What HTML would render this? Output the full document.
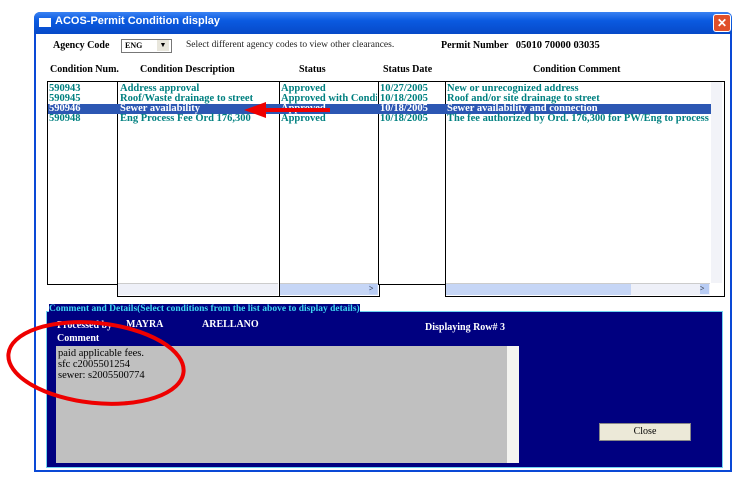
<!DOCTYPE html>
<html><head><style>
body{margin:0;width:743px;height:483px;background:#fff;position:relative;overflow:hidden;font-family:"Liberation Serif",serif;}
.a{position:absolute;}
.t{font-size:10.5px;font-weight:bold;color:#008080;white-space:nowrap;line-height:10px}
.h{font-size:10px;font-weight:bold;color:#000;white-space:nowrap}
.box{position:absolute;background:#fff;border:1px solid #000;overflow:hidden}
.hs{position:absolute;height:11px;background:#eef0f8;border-top:1px solid #ccc}
.vs{position:absolute;width:11px;background:#f2f3f8}
</style></head><body>
<div class="a" style="left:34px;top:12px;width:698px;height:460px;background:#0a49d6;border-radius:6px 6px 0 0"></div>
<div class="a" style="left:34px;top:12px;width:698px;height:22px;background:linear-gradient(#3a82f2,#0a5ae0 40%,#0749c8);border-radius:6px 6px 0 0"></div>
<div class="a" style="left:39px;top:18px;width:12px;height:9px;background:#fff"></div>
<div class="a" style="left:55px;top:15px;color:#fff;font:bold 11px 'Liberation Sans',sans-serif">ACOS-Permit Condition display</div>
<div class="a" style="left:713px;top:14px;width:16px;height:16px;background:#e0502a;border:1px solid #fff;border-radius:3px;color:#fff;font:bold 12px 'Liberation Sans',sans-serif;text-align:center;line-height:16px">✕</div>
<div class="a" style="left:36px;top:34px;width:694px;height:436px;background:#fff"></div>

<div class="a h" style="left:53px;top:40px">Agency Code</div>
<div class="a" style="left:121px;top:39px;width:49px;height:12px;border:1px solid #777;background:#fff"></div>
<div class="a" style="left:125px;top:41px;font-size:8px;font-weight:bold">ENG</div>
<div class="a" style="left:157px;top:40px;width:12px;height:11px;background:#e8e6dc;font-size:7px;text-align:center;line-height:11px">▼</div>
<div class="a" style="left:186px;top:40px;font-size:9.5px;color:#222">Select different agency codes to view other clearances.</div>
<div class="a h" style="left:441px;top:40px">Permit Number &nbsp;&nbsp;<span style="font-size:10.5px">05010 70000 03035</span></div>

<div class="a h" style="left:50px;top:64px">Condition Num.</div>
<div class="a h" style="left:140px;top:64px">Condition Description</div>
<div class="a h" style="left:299px;top:64px">Status</div>
<div class="a h" style="left:383px;top:64px">Status Date</div>
<div class="a h" style="left:533px;top:64px">Condition Comment</div>

<div class="box" style="left:47px;top:81px;width:70px;height:202px"></div>
<div class="box" style="left:117px;top:81px;width:161px;height:214px"></div>
<div class="box" style="left:279px;top:81px;width:99px;height:214px"></div>
<div class="box" style="left:378px;top:81px;width:67px;height:202px"></div>
<div class="box" style="left:445px;top:81px;width:278px;height:214px"></div>
<div class="a" style="left:48px;top:104px;width:663px;height:10px;background:#2c57b3"></div>
<div class="a t" style="left:49px;top:84px">590943<br>590945<br><span style="color:#fff">590946</span><br>590948</div>
<div class="a t" style="left:120px;top:84px">Address approval<br>Roof/Waste drainage to street<br><span style="color:#fff">Sewer availability</span><br>Eng Process Fee Ord 176,300</div>
<div class="a t" style="left:281px;top:84px;width:96px;overflow:hidden">Approved<br>Approved with Condition<br><span style="color:#fff">Approved</span><br>Approved</div>
<div class="a t" style="left:380px;top:84px">10/27/2005<br>10/18/2005<br><span style="color:#fff">10/18/2005</span><br>10/18/2005</div>
<div class="a t" style="left:447px;top:84px;width:264px;overflow:hidden">New or unrecognized address<br>Roof and/or site drainage to street<br><span style="color:#fff">Sewer availability and connection</span><br>The fee authorized by Ord. 176,300 for PW/Eng to process clearances</div>
<div class="hs" style="left:118px;top:283px;width:160px"></div>
<div class="hs" style="left:280px;top:283px;width:98px;background:#c6d6f6"></div>
<div class="hs" style="left:446px;top:283px;width:264px;background:linear-gradient(90deg,#c6d6f6 70%,#eef0f8 70%)"></div>
<div class="vs" style="left:711px;top:82px;height:201px"></div>
<div class="a" style="left:369px;top:284px;width:8px;height:10px;background:#b8ccf4;font-size:8px;line-height:10px">&gt;</div>
<div class="a" style="left:700px;top:284px;width:9px;height:10px;background:#b8ccf4;font-size:8px;line-height:10px">&gt;</div>

<div class="a" style="left:46px;top:311px;width:675px;height:155px;background:#000080;border:1px solid #6fd3f0"></div>
<div class="a" style="left:49px;top:304px;background:#000080;color:#3fd6f0;font-size:9.5px;font-weight:bold;white-space:nowrap">Comment and Details(Select conditions from the list above to display details)</div>
<div class="a" style="left:57px;top:319px;color:#fff;font-size:10px;font-weight:bold;line-height:13px">Processed by<br>Comment</div>
<div class="a" style="left:126px;top:319px;color:#fff;font-size:10px;font-weight:bold">MAYRA</div>
<div class="a" style="left:202px;top:319px;color:#fff;font-size:10px;font-weight:bold">ARELLANO</div>
<div class="a" style="left:425px;top:322px;color:#fff;font-size:10px;font-weight:bold">Displaying Row# 3</div>
<div class="a" style="left:56px;top:346px;width:451px;height:117px;background:#c0c0c0;color:#000;font-size:10.5px;line-height:11px;padding:2px 0 0 2px;box-sizing:border-box">paid applicable fees.<br>sfc c2005501254<br>sewer: s2005500774</div>
<div class="a" style="left:507px;top:346px;width:12px;height:117px;background:#f4f4f0"></div>
<div class="a" style="left:599px;top:423px;width:92px;height:18px;background:#ece9d8;border:1px solid #888;box-sizing:border-box;font-size:10px;text-align:center;line-height:16px">Close</div>

<svg class="a" style="left:0;top:0" width="743" height="483">
<line x1="330" y1="110" x2="262" y2="110" stroke="#e00" stroke-width="4"/>
<polygon points="244,110 266,102 266,118" fill="#e00"/>
<ellipse cx="96" cy="363" rx="88" ry="40" transform="rotate(6 96 363)" fill="none" stroke="#e00" stroke-width="4"/>
</svg>
</body></html>
